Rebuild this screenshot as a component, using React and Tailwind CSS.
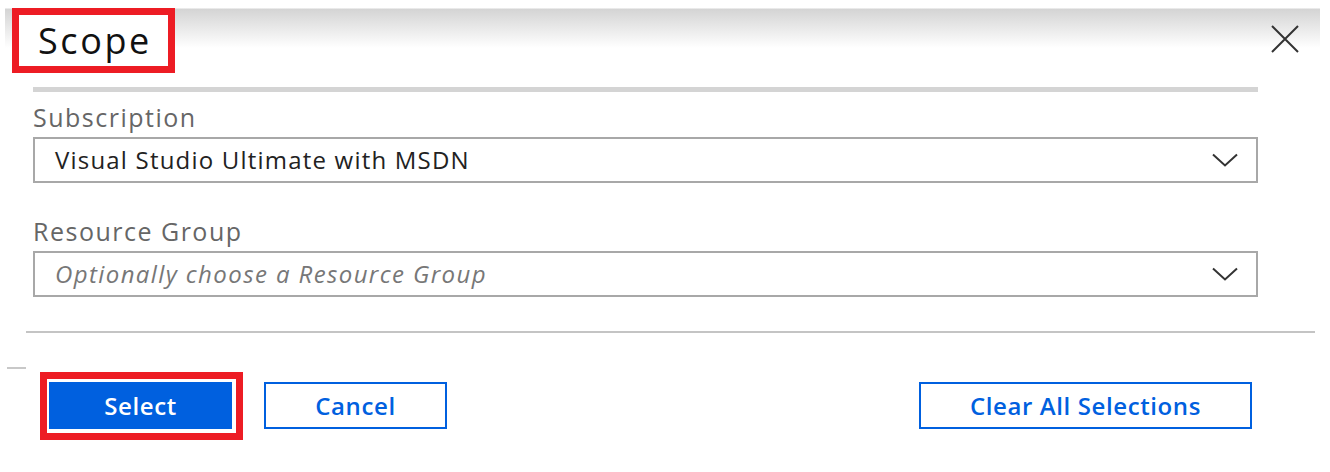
import React from "react";

const Chevron = () => (
  <svg width="26" height="14" viewBox="0 0 26 14" fill="none" stroke="#333" strokeWidth="2">
    <path d="M1 1.5l12 11 12-11" />
  </svg>
);

const CloseIcon = () => (
  <svg width="30" height="28" viewBox="0 0 30 28" fill="none" stroke="#333" strokeWidth="2">
    <path d="M2 1l26 26M28 1L2 27" />
  </svg>
);

const Dropdown = ({ label, value, placeholder }) => (
  <div className="flex flex-col">
    <div className="text-[25px] leading-[30px] tracking-[1.5px] text-[#666] mb-[5px]">{label}</div>
    <div className="h-[46px] border-2 border-[#a8a8a8] flex items-center pl-[20px] pr-[18px]">
      {value ? (
        <span className="text-[24px] tracking-[1.2px] text-[#222]">{value}</span>
      ) : (
        <span className="text-[24px] tracking-[1.4px] italic text-[#777]">{placeholder}</span>
      )}
      <div className="ml-auto flex items-center">
        <Chevron />
      </div>
    </div>
  </div>
);

export default function App() {
  return (
    <div className="w-[1330px] h-[472px] bg-white overflow-hidden font-['Open_Sans',sans-serif]">
      {/* header */}
      <div className="mt-[8px] ml-[5px] w-[1315px] h-[65px] flex items-start pl-[7px] pr-[20px] bg-[linear-gradient(to_bottom,white_0px,#d4d4d4_1px,white_40px)]">
        <div className="w-[163px] h-[65px] border-[7px] border-[#ed1c24] bg-white flex items-center pl-[19px]">
          <span className="text-[36px] font-medium tracking-[2.6px] text-[#111] leading-none">Scope</span>
        </div>
        <div className="ml-auto mt-[17px]">
          <CloseIcon />
        </div>
      </div>

      <div className="ml-[33px] w-[1225px]">
        <div className="mt-[14px] h-[5px] bg-[#d4d4d4]" />
        <div className="mt-[10px]">
          <Dropdown label="Subscription" value="Visual Studio Ultimate with MSDN" />
        </div>
        <div className="mt-[33px]">
          <Dropdown label="Resource Group" placeholder="Optionally choose a Resource Group" />
        </div>
      </div>

      <div className="mt-[34px] ml-[26px] w-[1289px] h-[2px] bg-[#c4c4c4]" />
      <div className="mt-[34px] ml-[7px] w-[19px] h-[2px] bg-[#c8c8c8]" />

      {/* actions */}
      <div className="mt-[3px] flex items-start pl-[40px] pr-[78px]">
        <div className="border-[7px] border-[#ed1c24] pt-[3px] pr-[4px] pb-[4px] pl-[2px]">
          <button className="w-[183px] h-[47px] bg-[#0060df] text-white text-[24px] tracking-[0.6px] font-semibold">
            Select
          </button>
        </div>
        <button className="ml-[21px] mt-[10px] w-[183px] h-[47px] border-2 border-[#0060df] text-[#0060df] text-[24px] tracking-[0.6px] font-semibold">
          Cancel
        </button>
        <button className="ml-auto mt-[10px] w-[333px] h-[47px] border-2 border-[#0060df] text-[#0060df] text-[24px] tracking-[0.6px] font-semibold">
          Clear All Selections
        </button>
      </div>
    </div>
  );
}
